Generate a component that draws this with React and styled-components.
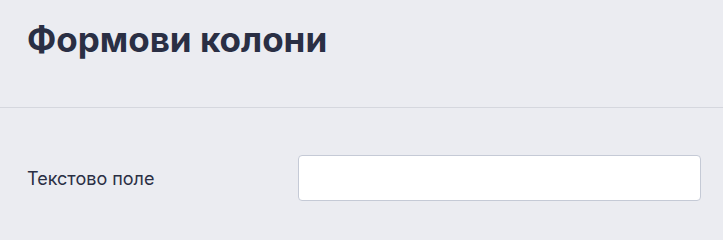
import React from "react";
import styled, { createGlobalStyle } from "styled-components";

const Global = createGlobalStyle`
  html, body { margin: 0; padding: 0; background: #ebecf1; }
  body { font-family: Inter, "Noto Sans", Arial, sans-serif; }
`;

const Page = styled.div`
  width: 723px;
  height: 235px;
  background: #ebecf1;
  overflow: hidden;
`;

const Header = styled.header`
  height: 108px;
  box-sizing: border-box;
  padding: 0 27px;
  border-bottom: 1px solid #d5d7de;
  display: flex;
  align-items: flex-start;
`;

const Title = styled.h1`
  margin: 17px 0 0;
  font-size: 35px;
  line-height: 44px;
  font-weight: 700;
  color: #2a2f44;
`;

const Form = styled.div`
  padding: 47px 22px 0 27px;
`;

const Row = styled.div`
  display: grid;
  grid-template-columns: 271px 1fr;
  align-items: center;
`;

const Label = styled.label`
  font-size: 18px;
  color: #2a2f44;
`;

const Input = styled.input`
  box-sizing: border-box;
  height: 46px;
  width: 403px;
  border: 1px solid #c5cad6;
  border-radius: 4px;
  background: #fff;
  outline: none;
  padding: 0 12px;
  font: inherit;
`;

export default function App() {
  return (
    <Page>
      <Global />
      <Header>
        <Title>Формови колони</Title>
      </Header>
      <Form>
        <Row>
          <Label htmlFor="t">Текстово поле</Label>
          <Input id="t" type="text" />
        </Row>
      </Form>
    </Page>
  );
}
